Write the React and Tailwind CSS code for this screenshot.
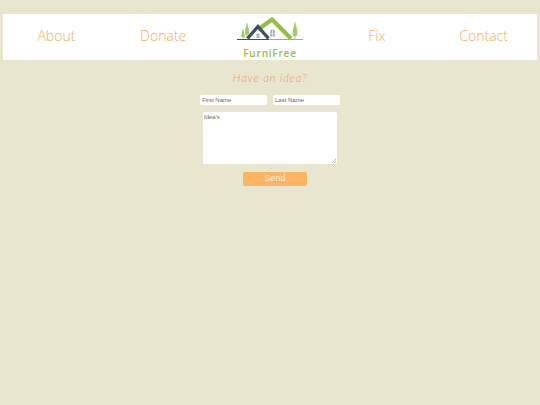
import React from 'react';

const Logo = () => (
  <svg width="66" height="25" viewBox="0 0 66 25" className="mt-[1px] block">
    {/* trees */}
    <path d="M6 22V12" stroke="#8fc04a" strokeWidth="0.7" />
    <path d="M6 13c-1.300 2.500-2 5-1.700 6.500.3 1.300 3.100 1.300 3.400 0 .3-1.500-.4-4-1.700-6.500z" fill="#a3cc6a" />
    <path d="M10 21V6" stroke="#8fc04a" strokeWidth="0.7" />
    <path d="M10 7c-1.500 3-2.500 6.500-2 9.500.3 1.800 3.700 1.800 4 0 .5-3-.5-6.500-2-9.500z" fill="#a3cc6a" />
    <path d="M58 22V5" stroke="#8fc04a" strokeWidth="0.7" />
    <path d="M58 6c-1.700 3.500-2.800 8-2.300 12 .3 1.800 4.300 1.800 4.600 0 .5-4-.6-8.500-2.300-12z" fill="#a3cc6a" />
    {/* green roof */}
    <path d="M21 12.500 35 2.500 54 21.500" fill="none" stroke="#8fc04a" strokeWidth="4.200" strokeLinejoin="miter" />
    {/* window of the big house */}
    <path d="M33 19.500v-4.500a2.500 2.500 0 0 1 5 0v4.500z" fill="#a9b2bb" />
    <path d="M35.500 13v6.500M33 16.500h5" stroke="#fff" strokeWidth="0.6" />
    {/* dark roof */}
    <path d="M10.500 21.500 21 9.500l10.500 12" fill="none" stroke="#414f66" strokeWidth="3.400" strokeLinejoin="miter" />
    <path d="M19.500 21v-3.500l1.500-1.500 1.500 1.500V21z" fill="#a9b2bb" />
    {/* ground */}
    <path d="M0 22.500h32" stroke="#414f66" strokeWidth="1" />
    <path d="M32 22.500h34" stroke="#8fc04a" strokeWidth="1" />
  </svg>
);

const NavLink = ({ label }) => (
  <a href="#" className="flex-1 pb-[4px] text-center text-[14px] font-light text-[#f4ac62] font-['Open_Sans',sans-serif]">
    {label}
  </a>
);

const fieldClass = "bg-white text-black placeholder:text-[#666] font-['Liberation_Sans',sans-serif]";

const App = () => {
  return (
    <div className="min-h-[405px] bg-[#e9e6d0] pt-[14px] px-[3px]">
      <nav className="flex h-[46px] items-center bg-white">
        <NavLink label="About" />
        <NavLink label="Donate" />
        <div className="flex flex-1 flex-col items-center">
          <Logo />
          <span className="mt-[6px] text-[10px] leading-[11px] font-semibold tracking-[0.8px] text-[#8fc04a] font-['Open_Sans',sans-serif]">
            FurniFree
          </span>
        </div>
        <NavLink label="Fix" />
        <NavLink label="Contact" />
      </nav>

      <form className="flex flex-col items-center">
        <h2 className="mt-[10px] text-[11.5px] leading-[16px] font-light tracking-[0.7px] italic text-[#eb9f5c] font-['Lato',sans-serif]">
          Have an idea?
        </h2>
        <div className="mt-[9px] flex gap-[6px]">
          <input
            placeholder="First Name"
            className={`h-[10px] w-[67px] rounded-[2px] px-[2px] text-[6px] ${fieldClass}`}
          />
          <input
            placeholder="Last Name"
            className={`h-[10px] w-[67px] rounded-[2px] px-[2px] text-[6px] ${fieldClass}`}
          />
        </div>
        <div className="relative mt-[6.5px]">
          <textarea
            placeholder="Idea's"
            className={`block h-[52.5px] w-[134px] resize-none rounded-[2px] p-[1px] text-[6px] ${fieldClass}`}
          />
          <svg width="4" height="4" viewBox="0 0 4 4" className="absolute right-[1px] bottom-[1px]">
            <path d="M0 4 4 0M2 4 4 2" stroke="#777" strokeWidth="0.5" />
          </svg>
        </div>
        <button
          type="button"
          className="mt-[8px] ml-[10px] h-[14px] w-[64px] rounded-[2px] bg-[#fdb364] text-[9px] text-[#fdeedd] font-['Liberation_Sans',sans-serif]"
        >
          Send
        </button>
      </form>
    </div>
  );
};

export default App;
